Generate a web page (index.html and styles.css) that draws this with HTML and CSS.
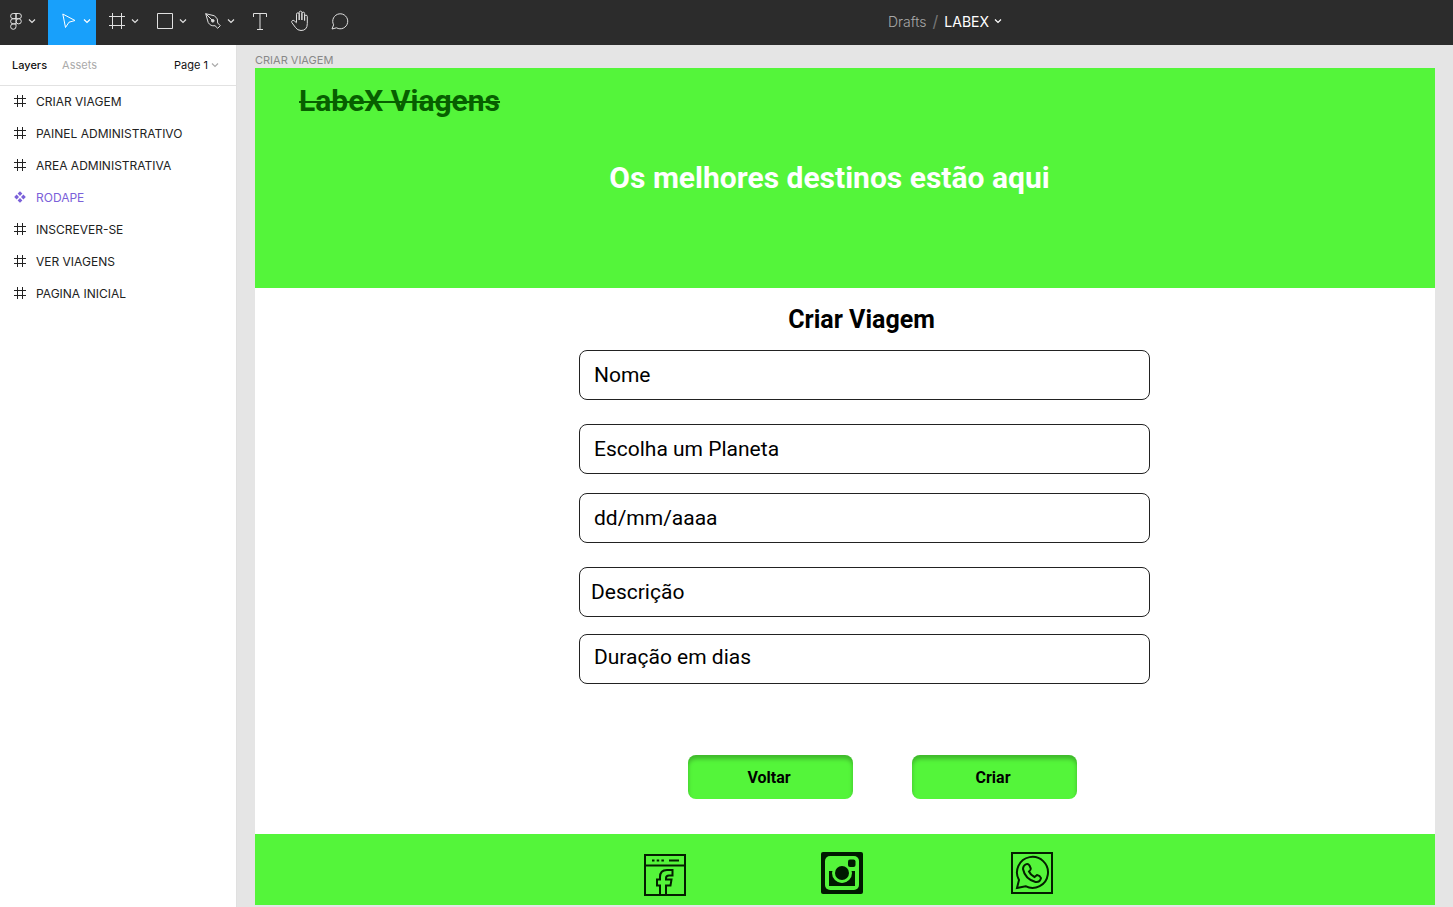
FILE: index.html
```html
<!DOCTYPE html>
<html lang="pt-BR">
<head>
<meta charset="utf-8">
<title>LABEX</title>
<link rel="stylesheet" href="styles.css">
</head>
<body>
<svg class="defs" aria-hidden="true">
  <symbol id="chevron" viewBox="0 0 8 6"><path d="M1 1.500L4 4.500L7 1.500" fill="none" stroke="currentColor" stroke-width="1.200"/></symbol>
  <symbol id="hash" viewBox="0 0 12 12"><path d="M3.500 0V12M8.500 0V12M0 3.500H12M0 8.500H12" fill="none" stroke="currentColor"/></symbol>
</svg>
<div class="app">
  <header class="toolbar">
    <div class="tools">
      <button class="tool wide" aria-label="Menu">
        <svg width="12" height="17" viewBox="0 0 12 17" fill="none" stroke="currentColor"><path d="M6 .5H3.200a2.600 2.600 0 0 0 0 5.200H6zM6 .5H8.800a2.600 2.600 0 0 1 0 5.200H6zM6 5.700H3.200a2.600 2.600 0 0 0 0 5.200H6zM6 10.900H3.200A2.700 2.700 0 1 0 6 13.600z"/><circle cx="8.700" cy="8.300" r="2.600"/></svg>
        <svg class="chev" width="8" height="6"><use href="#chevron"/></svg>
      </button>
      <button class="tool wide active" aria-label="Move">
        <svg width="16" height="16" viewBox="0 0 16 16" fill="none" stroke="currentColor"><path d="M1.800 1L14 7.500L8 9.200L4.500 14.500Z"/></svg>
        <svg class="chev" width="8" height="6"><use href="#chevron"/></svg>
      </button>
      <button class="tool wide" aria-label="Frame">
        <svg width="16" height="16" viewBox="0 0 16 16" fill="none" stroke="currentColor"><path d="M3.500 0V16M12.500 0V16M0 3.500H16M0 12.500H16"/></svg>
        <svg class="chev" width="8" height="6"><use href="#chevron"/></svg>
      </button>
      <button class="tool wide" aria-label="Rectangle">
        <svg width="16" height="16" viewBox="0 0 16 16" fill="none" stroke="currentColor"><path d="M.5 .5H15.500V15.500H.5Z"/></svg>
        <svg class="chev" width="8" height="6"><use href="#chevron"/></svg>
      </button>
      <button class="tool wide" aria-label="Pen">
        <svg width="16" height="16" viewBox="0 0 16 16" fill="none" stroke="currentColor"><path d="M.7 .7L9.500 2.800Q13.500 5.500 12.700 10L15.300 12.700L12.700 15.300L10 12.700Q5.500 13.500 3.200 9.500ZM.7 .7L7 7"/><circle cx="7.800" cy="7.800" r="1.300" fill="currentColor"/></svg>
        <svg class="chev" width="8" height="6"><use href="#chevron"/></svg>
      </button>
      <button class="tool" aria-label="Text">
        <svg width="14" height="17" viewBox="0 0 14 17" fill="none" stroke="currentColor"><path d="M.5 4V.5H13.500V4M7 .5V16.500M4 16.500H10"/></svg>
      </button>
      <button class="tool" aria-label="Hand">
        <svg width="20" height="22" viewBox="0 0 20 22" fill="none" stroke="currentColor"><path d="M6.500 12.500V4.200a1.300 1.300 0 0 1 2.700 0V10V2.500a1.300 1.300 0 0 1 2.700 0V10V3.500a1.300 1.300 0 0 1 2.700 0V10.500V6.500a1.300 1.300 0 0 1 2.700 0V13.500Q17.300 20.500 11 20.500Q7.500 20.500 5.500 17.500L1.800 12.500a1.500 1.500 0 0 1 2.300-1.800L6.500 12.800"/></svg>
      </button>
      <button class="tool" aria-label="Comment">
        <svg width="18" height="17" viewBox="0 0 18 17" fill="none" stroke="currentColor"><path d="M1 16L2.600 11.800A7.500 7.500 0 1 1 5.500 14.800Z"/></svg>
      </button>
    </div>
    <div class="doc">
      <a class="drafts" href="#">Drafts</a>
      <span class="slash">/</span>
      <button class="docname">LABEX <svg width="8" height="6"><use href="#chevron"/></svg></button>
    </div>
  </header>
  <div class="workspace">
    <aside class="sidebar">
      <div class="tabs">
        <button class="tab current">Layers</button>
        <button class="tab">Assets</button>
        <button class="tab page">Page 1 <svg width="8" height="6"><use href="#chevron"/></svg></button>
      </div>
      <ul class="layers">
        <li><svg width="12" height="12"><use href="#hash"/></svg>CRIAR VIAGEM</li>
        <li><svg width="12" height="12"><use href="#hash"/></svg>PAINEL ADMINISTRATIVO</li>
        <li><svg width="12" height="12"><use href="#hash"/></svg>AREA ADMINISTRATIVA</li>
        <li class="component"><svg width="12" height="12" viewBox="0 0 12 12" fill="currentColor"><path d="M6 .2L8.400 2.600L6 5L3.600 2.600ZM2.600 3.600L5 6L2.600 8.400L.2 6ZM9.400 3.600L11.800 6L9.400 8.400L7 6ZM6 7L8.400 9.400L6 11.800L3.600 9.400Z"/></svg>RODAPE</li>
        <li><svg width="12" height="12"><use href="#hash"/></svg>INSCREVER-SE</li>
        <li><svg width="12" height="12"><use href="#hash"/></svg>VER VIAGENS</li>
        <li><svg width="12" height="12"><use href="#hash"/></svg>PAGINA INICIAL</li>
      </ul>
    </aside>
    <main class="canvas">
      <div class="frame-label">CRIAR VIAGEM</div>
      <section class="frame">
        <div class="hero">
          <h1 class="brand">LabeX Viagens</h1>
          <p class="slogan">Os melhores destinos estão aqui</p>
        </div>
        <form class="trip">
          <h2 class="heading">Criar Viagem</h2>
          <div class="fields">
            <input class="field" type="text" placeholder="Nome" aria-label="Nome">
            <select class="field roomy" aria-label="Escolha um Planeta"><option>Escolha um Planeta</option></select>
            <input class="field close" type="text" placeholder="dd/mm/aaaa" aria-label="Data">
            <input class="field roomy outdent" type="text" placeholder="Descrição" aria-label="Descrição">
            <input class="field close raised" type="text" placeholder="Duração em dias" aria-label="Duração em dias">
          </div>
          <div class="actions">
            <button class="action" type="button">Voltar</button>
            <button class="action" type="button">Criar</button>
          </div>
        </form>
        <footer class="footer">
          <a class="facebook" href="#" aria-label="Facebook"><svg width="42" height="42" viewBox="0 0 42 42" fill="none" stroke="#041f00" stroke-width="2"><path d="M1 1H41V41H1ZM1 11.500H41"/><path d="M8 6.500h2.500m2.200 0h2.500m2.200 0h2.500M25 6.500h10"/><path d="M16 41V31.500H13V25.500H16V23Q16 16 23 16H28.500V21.500H25Q22 21.500 22 24V25.500H27.500L26.500 31.500H22V41"/></svg></a>
          <a class="instagram" href="#" aria-label="Instagram"><svg width="42" height="42" viewBox="0 0 42 42"><rect x="0" y="0" width="42" height="42" rx="2" fill="#001900"/><rect x="4" y="4" width="34" height="34" rx="5" fill="#54f53a"/><path d="M8 19H12Q12 30 21 30.500Q30 30 30 19H34V34H8Z" fill="#001900"/><circle cx="21" cy="21" r="10" fill="#54f53a"/><circle cx="21" cy="21" r="7" fill="#001900"/><rect x="27" y="7.500" width="7.500" height="7.500" rx="2" fill="#001900"/></svg></a>
          <a class="whatsapp" href="#" aria-label="WhatsApp"><svg width="42" height="42" viewBox="0 0 42 42" fill="none" stroke="#041f00" stroke-width="2"><path d="M1 1H41V41H1Z"/><path d="M6 36L8 28A15.500 15.500 0 1 1 14.500 34.200Z"/><path d="M14.500 12.500Q17 11 18.500 13.500L19.800 16.500Q20 18 18 19.500Q19.500 23 23.500 25L26 23Q29 23.500 30 26Q29 30.500 24.500 30Q14 27 12 17Q12 14 14.500 12.500Z"/></svg></a>
        </footer>
      </section>
    </main>
  </div>
</div>
</body>
</html>
```
FILE: styles.css
```css
* { box-sizing: border-box; }
body { margin: 0; font-family: Inter, "Liberation Sans", sans-serif; font-size: 11px; color: #222; }
button { border: 0; padding: 0; background: none; color: inherit; font: inherit; }
a { color: inherit; text-decoration: none; }
svg { display: block; flex: none; }
.defs { position: absolute; width: 0; height: 0; }

.app { display: flex; flex-direction: column; height: 100vh; overflow: hidden; }
.toolbar { display: flex; flex: none; height: 45px; background: #2c2c2c; color: #e0e0e0; }
.tools { display: flex; flex: none; }
.tool { display: flex; align-items: center; justify-content: center; width: 40px; padding-bottom: 3px; }
.tool.wide { width: 48px; gap: 6px; padding-left: 8px; }
.tool.wide:first-child { padding: 0 2px 3px 0; }
.tool.active { background: #18a0fb; color: #fff; }
.doc { display: flex; flex: 1; align-items: center; justify-content: center; gap: 6px; padding: 0 0 3px 77px; font-size: 14px; }
.drafts { color: #a8a8a8; font-weight: 300; }
.slash { color: #777; font-size: 16px; }
.docname { display: flex; align-items: center; gap: 5px; color: #fff; }

.workspace { display: flex; flex: 1; min-height: 0; }
.sidebar { flex: none; width: 237px; background: #fff; border-right: 1px solid #e0e0e0; }
.tabs { display: flex; align-items: center; gap: 15px; height: 40px; padding: 0 17px 0 12px; box-shadow: 0 1px 0 #e2e2e2; }
.tab { color: #aaa; }
.tab.current { color: #111; font-weight: 500; }
.tab.page { display: flex; align-items: center; gap: 3px; margin-left: auto; color: #111; }
.tab svg { color: #aaa; }
.layers { margin: 0; padding: 0; list-style: none; font-size: 12px; }
.layers li { display: flex; align-items: center; gap: 10px; height: 32px; padding-left: 14px; }
.layers .component { color: #7b61d9; }

.canvas { flex: 1; padding: 8px 18px 0; background: #e5e5e5; }
.frame-label { height: 15px; line-height: 15px; color: #888; }
.frame { background: #fff; color: #000; font-family: Roboto, sans-serif; }
.hero { height: 220px; padding: 15px 44px; background: #54f53a; }
.brand { margin: 0; font-size: 30px; line-height: 35px; color: #075f00; text-decoration: line-through 2px; }
.slogan { margin: 42px 31px 0 0; font-size: 30px; line-height: 35px; font-weight: 700; color: #fff; text-align: center; }
.trip { display: flex; flex-direction: column; align-items: center; height: 546px; padding: 17px 0 0 39px; }
.heading { margin: 0 6px 0 0; font-size: 25px; line-height: 30px; }
.fields { display: flex; flex-direction: column; width: 100%; max-width: 571px; margin-top: 15px; }
.field { width: 100%; height: 50px; padding: 0 14px; border: 1px solid #222; border-radius: 8px; background: #fff; color: #000; font: 21px Roboto, sans-serif; appearance: none; }
.field::placeholder { color: #000; opacity: 1; }
.field.roomy { margin-top: 24px; }
.field.close { margin-top: 19px; }
.field.outdent { padding-left: 11px; }
.field.raised { margin-top: 17px; padding-bottom: 5px; }
.actions { display: flex; gap: 59px; margin: 71px 0 0 36px; }
.action { width: 165px; height: 44px; padding-right: 3px; border-radius: 8px; background: #54f53a; box-shadow: inset 0 4px 4px rgba(0, 0, 0, 0.25); font-size: 16px; font-weight: 700; }
.footer { display: flex; justify-content: center; gap: 141px; height: 71px; padding: 18px 0 0 6px; background: #54f53a; }
.facebook { padding-top: 2px; }
.instagram { margin-right: 7px; margin-left: -6px; }
```
